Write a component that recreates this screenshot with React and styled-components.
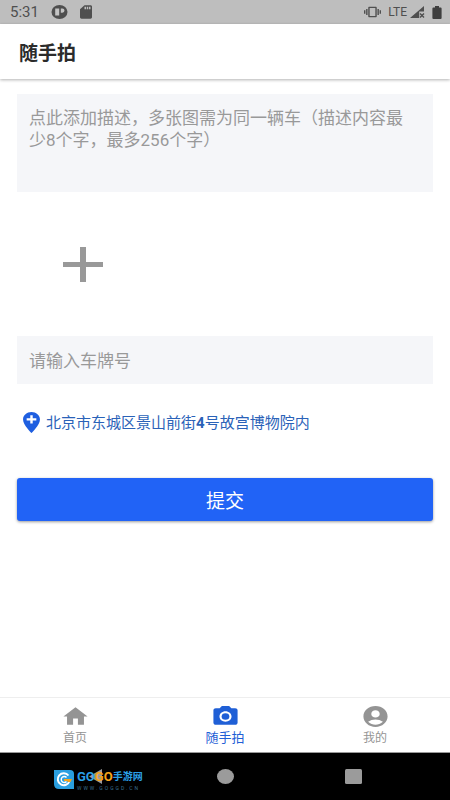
import { useState } from "react";
import styled, { createGlobalStyle } from "styled-components";
import {
  MdAccountCircle,
  MdAddLocation,
  MdCameraAlt,
  MdHome,
  MdSdCard,
  MdVibration,
} from "react-icons/md";

const GlobalStyle = createGlobalStyle`
  * {
    box-sizing: border-box;
  }
  body {
    margin: 0;
    background: #fff;
    font-family: Roboto, "Noto Sans CJK SC", sans-serif;
  }
  button, input, textarea {
    font-family: inherit;
  }
`;

const Screen = styled.div`
  display: flex;
  flex-direction: column;
  min-height: 100vh;
`;

const StatusBar = styled.div`
  display: flex;
  align-items: center;
  justify-content: space-between;
  height: 24px;
  padding: 0 8px 0 10px;
  background: #bebebe;
  color: #4f4f4f;
`;

const StatusGroup = styled.div`
  display: flex;
  align-items: center;
  gap: ${(props) => props.$gap}px;
`;

const Clock = styled.span`
  font-size: 15px;
  line-height: 24px;
`;

const Network = styled.span`
  font-size: 12px;
  line-height: 24px;
`;

const Header = styled.header`
  display: flex;
  align-items: center;
  height: 55px;
  padding: 4px 19px 0;
  box-shadow: 0 1px 3px rgba(0, 0, 0, 0.3);
`;

const Title = styled.h1`
  margin: 0;
  color: #2b2b2b;
  font-size: 19px;
  line-height: 24px;
  font-weight: 700;
`;

const Form = styled.form`
  flex: 1;
  display: flex;
  flex-direction: column;
  padding: 15px 17px;
`;

const Description = styled.textarea`
  display: block;
  width: 100%;
  height: 98px;
  padding: 13px 16px 12px 12px;
  border: 0;
  background: #f5f6f9;
  color: #333;
  font-size: 17px;
  line-height: 22px;
  resize: none;
  outline: none;
  &::placeholder {
    color: #999;
    opacity: 1;
  }
`;

const AddPhoto = styled.button`
  display: flex;
  align-items: center;
  justify-content: center;
  width: 132px;
  height: 98px;
  margin: 23px 0;
  padding: 0;
  border: 0;
  background: none;
`;

const PlateInput = styled.input`
  width: 100%;
  height: 48px;
  padding: 2px 12px 0;
  border: 0;
  background: #f5f6f9;
  color: #333;
  font-size: 17px;
  outline: none;
  &::placeholder {
    color: #999;
    opacity: 1;
  }
`;

const Location = styled.a`
  display: flex;
  align-items: center;
  margin-top: 26px;
  color: #2a62b8;
  font-size: 15px;
  line-height: 24px;
  text-decoration: none;
  svg {
    flex: none;
    color: #1f5fe0;
  }
  b {
    font-weight: 700;
  }
`;

const Submit = styled.button`
  height: 43px;
  margin-top: 43px;
  padding: 4px 0 0;
  border: 0;
  border-radius: 3px;
  background: #2163f6;
  box-shadow: 0 1px 3px rgba(0, 0, 0, 0.4);
  color: #fff;
  font-size: 19px;
  line-height: 24px;
`;

const TabBar = styled.nav`
  display: flex;
  height: 56px;
  border-top: 1px solid #eee;
  border-bottom: 1px solid #999;
`;

const Tab = styled.a`
  flex: 1;
  display: flex;
  flex-direction: column;
  align-items: center;
  padding-top: 6px;
  color: ${(props) => (props.$active ? "#1f5fd6" : "#949494")};
  font-size: ${(props) => (props.$active ? 13 : 12)}px;
  line-height: 18px;
  text-decoration: none;
`;

const SystemBar = styled.div`
  position: relative;
  display: flex;
  height: 47px;
  padding: 0 32px;
  background: #000;
`;

const SystemButton = styled.button`
  flex: 1;
  display: flex;
  align-items: center;
  justify-content: center;
  padding: 0;
  border: 0;
  background: none;
`;

const Watermark = styled.div`
  position: absolute;
  left: 54px;
  top: 16px;
  display: flex;
  gap: 2px;
  pointer-events: none;
`;

const Brand = styled.div`
  display: flex;
  align-items: center;
  height: 16px;
  color: #2b9fe6;
  font-family: "Liberation Sans Narrow", Roboto, "Noto Sans CJK SC", sans-serif;
  font-size: 13px;
  line-height: 16px;
  font-weight: 700;
  white-space: nowrap;
`;

const BrandAccent = styled.span`
  color: #f5a31c;
`;

const BrandSuffix = styled.span`
  font-size: 10px;
`;

const BrandSite = styled.div`
  color: #3a6f92;
  font-size: 5px;
  line-height: 6px;
  letter-spacing: 2px;
  white-space: nowrap;
`;

const tabs = [
  { label: "首页", icon: MdHome, href: "#home" },
  { label: "随手拍", icon: MdCameraAlt, href: "#snap" },
  { label: "我的", icon: MdAccountCircle, href: "#mine" },
];

const WideIcon = styled.svg.attrs({
  preserveAspectRatio: "none",
  "aria-hidden": true,
})`
  width: ${(props) => props.$width || 29}px;
  height: ${(props) => props.$height || 25}px;
`;

const Status = () => (
  <StatusBar>
    <StatusGroup $gap={12}>
      <Clock>5:31</Clock>
      <StatusGroup $gap={9}>
        <svg width="17" height="14" viewBox="0 0 17 14">
          <ellipse cx="8.5" cy="7" rx="8" ry="7" fill="#4f4f4f" />
          <path
            d="M4.2 3.5h4v7h-4zM9.8 3.5h1.6a2 2 0 0 1 0 4.2H9.8z"
            fill="#c4c4c4"
          />
        </svg>
        <WideIcon as={MdSdCard} $width={18} $height={16} />
      </StatusGroup>
    </StatusGroup>
    <StatusGroup $gap={7}>
      <WideIcon as={MdVibration} $width={17} $height={14} />
      <StatusGroup $gap={3}>
        <Network>LTE</Network>
        <svg width="15" height="13" viewBox="0 0 15 13">
          <path d="M0 12 14 0v5.5H9.2V12z" fill="#4f4f4f" />
          <path
            d="m10 7.5 4 4m0-4-4 4"
            fill="none"
            stroke="#4f4f4f"
            strokeWidth="1.4"
          />
        </svg>
      </StatusGroup>
      <svg width="10" height="13" viewBox="0 0 10 13">
        <path
          d="M3 0h4v1.4h1.6q1 0 1 1V12q0 1-1 1H1.4q-1 0-1-1V2.4q0-1 1-1H3z"
          fill="#3f3f3f"
        />
      </svg>
    </StatusGroup>
  </StatusBar>
);

const System = () => (
  <SystemBar>
    <SystemButton aria-label="返回">
      <svg width="17" height="15" viewBox="0 0 17 15">
        <path d="M14 0v15L1 7.5z" fill="#9b9b9b" />
      </svg>
    </SystemButton>
    <SystemButton aria-label="主屏幕">
      <svg width="17" height="15" viewBox="0 0 17 15">
        <ellipse cx="8.5" cy="7.5" rx="8.5" ry="7.5" fill="#9b9b9b" />
      </svg>
    </SystemButton>
    <SystemButton aria-label="最近任务">
      <svg width="17" height="15" viewBox="0 0 17 15">
        <rect width="17" height="15" rx="1.5" fill="#9b9b9b" />
      </svg>
    </SystemButton>
    <Watermark>
      <svg width="21" height="21" viewBox="0 0 21 21">
        <path d="M0 1h16q4 0 4 4v15H5q-5 0-5-5z" fill="#2a9fe0" />
        <path
          d="M14.5 6.5A6 6 0 1 0 15.5 12"
          fill="none"
          stroke="#fff"
          strokeWidth="2"
        />
        <path
          d="M12.5 8.5A3 3 0 1 0 12.5 12.5"
          fill="none"
          stroke="#fff"
          strokeWidth="1.4"
        />
        <path d="M10 10h8l-1.5 3H14l-1-1h-3z" fill="#f5a31c" />
      </svg>
      <div>
        <Brand>
          GO<BrandAccent>GO</BrandAccent>
          <BrandSuffix>手游网</BrandSuffix>
        </Brand>
        <BrandSite>WWW.GOGGD.CN</BrandSite>
      </div>
    </Watermark>
  </SystemBar>
);

const App = () => {
  const [description, setDescription] = useState("");
  const [plate, setPlate] = useState("");

  return (
    <Screen>
      <GlobalStyle />
      <Status />
      <Header>
        <Title>随手拍</Title>
      </Header>
      <Form onSubmit={(e) => e.preventDefault()}>
        <Description
          aria-label="描述"
          placeholder="点此添加描述，多张图需为同一辆车（描述内容最少8个字，最多256个字）"
          maxLength={256}
          value={description}
          onChange={(e) => setDescription(e.target.value)}
        />
        <AddPhoto type="button" aria-label="添加图片">
          <svg width="40" height="35" viewBox="0 0 40 35">
            <path d="M0 15h17V0h6v15h17v5H23v15h-6V20H0z" fill="#999" />
          </svg>
        </AddPhoto>
        <PlateInput
          aria-label="车牌号"
          placeholder="请输入车牌号"
          value={plate}
          onChange={(e) => setPlate(e.target.value)}
        />
        <Location href="#location">
          <WideIcon as={MdAddLocation} />
          <span>
            北京市东城区景山前街<b>4</b>号故宫博物院内
          </span>
        </Location>
        <Submit type="submit">提交</Submit>
      </Form>
      <TabBar>
        {tabs.map((tab) => (
          <Tab key={tab.label} href={tab.href} $active={tab.href === "#snap"}>
            <WideIcon as={tab.icon} />
            {tab.label}
          </Tab>
        ))}
      </TabBar>
      <System />
    </Screen>
  );
};

export default App;
